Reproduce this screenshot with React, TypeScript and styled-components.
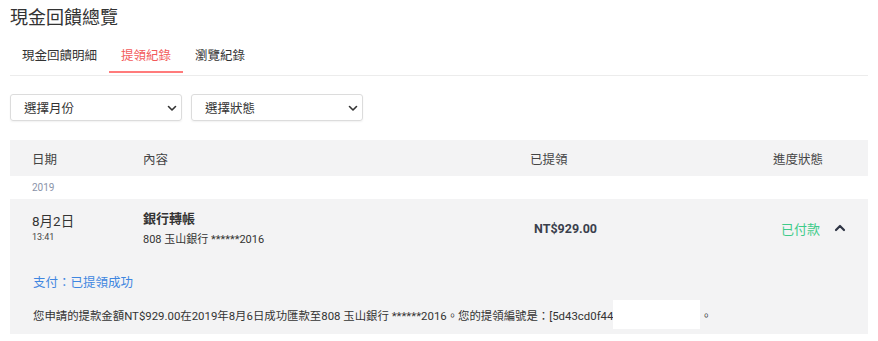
import React from "react";
import styled, { createGlobalStyle } from "styled-components";

const Global = createGlobalStyle`
  body {
    margin: 0;
    background: #fff;
    font-family: Roboto, "Noto Sans CJK TC", sans-serif;
    color: #333;
  }
`;

const Page = styled.div`
  padding: 0 10px 0 10px;
  width: 858px;
`;

const Title = styled.h1`
  margin: 0;
  padding-top: 5px;
  height: 31px;
  font-size: 18px;
  font-weight: 400;
  line-height: 26px;
  color: #333;
`;

const Tabs = styled.div`
  display: flex;
  margin-top: 5px;
  border-bottom: 1px solid #ececec;
  height: 34px;
`;

const Tab = styled.div<{ $active?: boolean }>`
  padding: 0 12px;
  font-size: 12.5px;
  line-height: 30px;
  color: ${(p) => (p.$active ? "#f25a5a" : "#333")};
  border-bottom: 2px solid ${(p) => (p.$active ? "#ff7b7b" : "transparent")};
  height: 32px;
  box-sizing: border-box;
`;

const Filters = styled.div`
  display: flex;
  gap: 9px;
  margin-top: 18px;
`;

const Select = styled.div`
  width: 172px;
  height: 27px;
  box-sizing: border-box;
  border: 1px solid #dcdcdc;
  border-radius: 3px;
  box-shadow: 0 1px 2px rgba(0, 0, 0, 0.06);
  display: flex;
  align-items: center;
  justify-content: space-between;
  padding: 0 3px 0 13px;
  font-size: 12.5px;
  color: #333;
`;

const Table = styled.div`
  margin-top: 19px;
`;

const Grid = styled.div`
  display: grid;
  grid-template-columns: 111px 387px 243px 1fr;
  padding-left: 22px;
  align-items: center;
`;

const Header = styled(Grid)`
  background: #f3f3f4;
  height: 36px;
  font-size: 12.5px;
  color: #444;
`;

const YearRow = styled.div`
  height: 23px;
  line-height: 23px;
  padding-left: 22px;
  font-size: 10px;
  color: #8a93a8;
`;

const Record = styled.div`
  background: #f3f3f4;
  padding-bottom: 5px;
`;

const Main = styled(Grid)`
  height: 58px;
`;

const DateCell = styled.div`
  display: flex;
  flex-direction: column;
  gap: 1px;
`;

const Day = styled.div`
  font-size: 13.5px;
  line-height: 18px;
  color: #333;
`;

const Time = styled.div`
  font-size: 9px;
  line-height: 13px;
  color: #444;
`;

const ContentCell = styled.div`
  display: flex;
  flex-direction: column;
  gap: 6px;
`;

const ContentTitle = styled.div`
  font-size: 13px;
  font-weight: 700;
  line-height: 17px;
  color: #333;
`;

const ContentSub = styled.div`
  font-size: 11px;
  line-height: 14px;
  color: #333;
`;

const Amount = styled.div`
  font-size: 12.5px;
  font-weight: 700;
  color: #3a3f4c;
  padding-left: 4px;
`;

const Status = styled.div`
  display: flex;
  align-items: center;
  gap: 14px;
  padding-left: 8px;
  font-size: 13px;
  color: #3ecb8a;
`;

const Detail = styled.div`
  padding: 13px 22px 0 23px;
`;

const DetailTitle = styled.div`
  font-size: 12.5px;
  line-height: 26px;
  color: #3f86e0;
`;

const DetailText = styled.div`
  margin-top: 4px;
  display: flex;
  align-items: center;
  font-size: 11.4px;
  color: #333;
  height: 29px;
  white-space: nowrap;
`;

const Mask = styled.span`
  display: inline-block;
  width: 87px;
  height: 29px;
  background: #fff;
`;

const Chevron = ({ up }: { up?: boolean }) => (
  <svg width="12" height="12" viewBox="0 0 12 12" fill="none">
    <path
      d={up ? "M2 8 L6 4 L10 8" : "M2.5 4.5 L6 8 L9.5 4.5"}
      stroke={up ? "#2e3444" : "#333"}
      strokeWidth={up ? 2.2 : 1.6}
      strokeLinecap="round"
      strokeLinejoin="round"
    />
  </svg>
);

export default function App() {
  return (
    <>
      <Global />
      <Page>
        <Title>現金回饋總覽</Title>
        <Tabs>
          <Tab>現金回饋明細</Tab>
          <Tab $active>提領紀錄</Tab>
          <Tab>瀏覽紀錄</Tab>
        </Tabs>
        <Filters>
          <Select>
            選擇月份
            <Chevron />
          </Select>
          <Select>
            選擇狀態
            <Chevron />
          </Select>
        </Filters>
        <Table>
          <Header>
            <div>日期</div>
            <div>內容</div>
            <div>已提領</div>
            <div>進度狀態</div>
          </Header>
          <YearRow>2019</YearRow>
          <Record>
            <Main>
              <DateCell>
                <Day>8月2日</Day>
                <Time>13:41</Time>
              </DateCell>
              <ContentCell>
                <ContentTitle>銀行轉帳</ContentTitle>
                <ContentSub>808 玉山銀行 ******2016</ContentSub>
              </ContentCell>
              <Amount>NT$929.00</Amount>
              <Status>
                已付款
                <Chevron up />
              </Status>
            </Main>
            <Detail>
              <DetailTitle>支付：已提領成功</DetailTitle>
              <DetailText>
                您申請的提款金額NT$929.00在2019年8月6日成功匯款至808 玉山銀行 ******2016。您的提領編號是：[5d43cd0f44
                <Mask />
                。
              </DetailText>
            </Detail>
          </Record>
        </Table>
      </Page>
    </>
  );
}
